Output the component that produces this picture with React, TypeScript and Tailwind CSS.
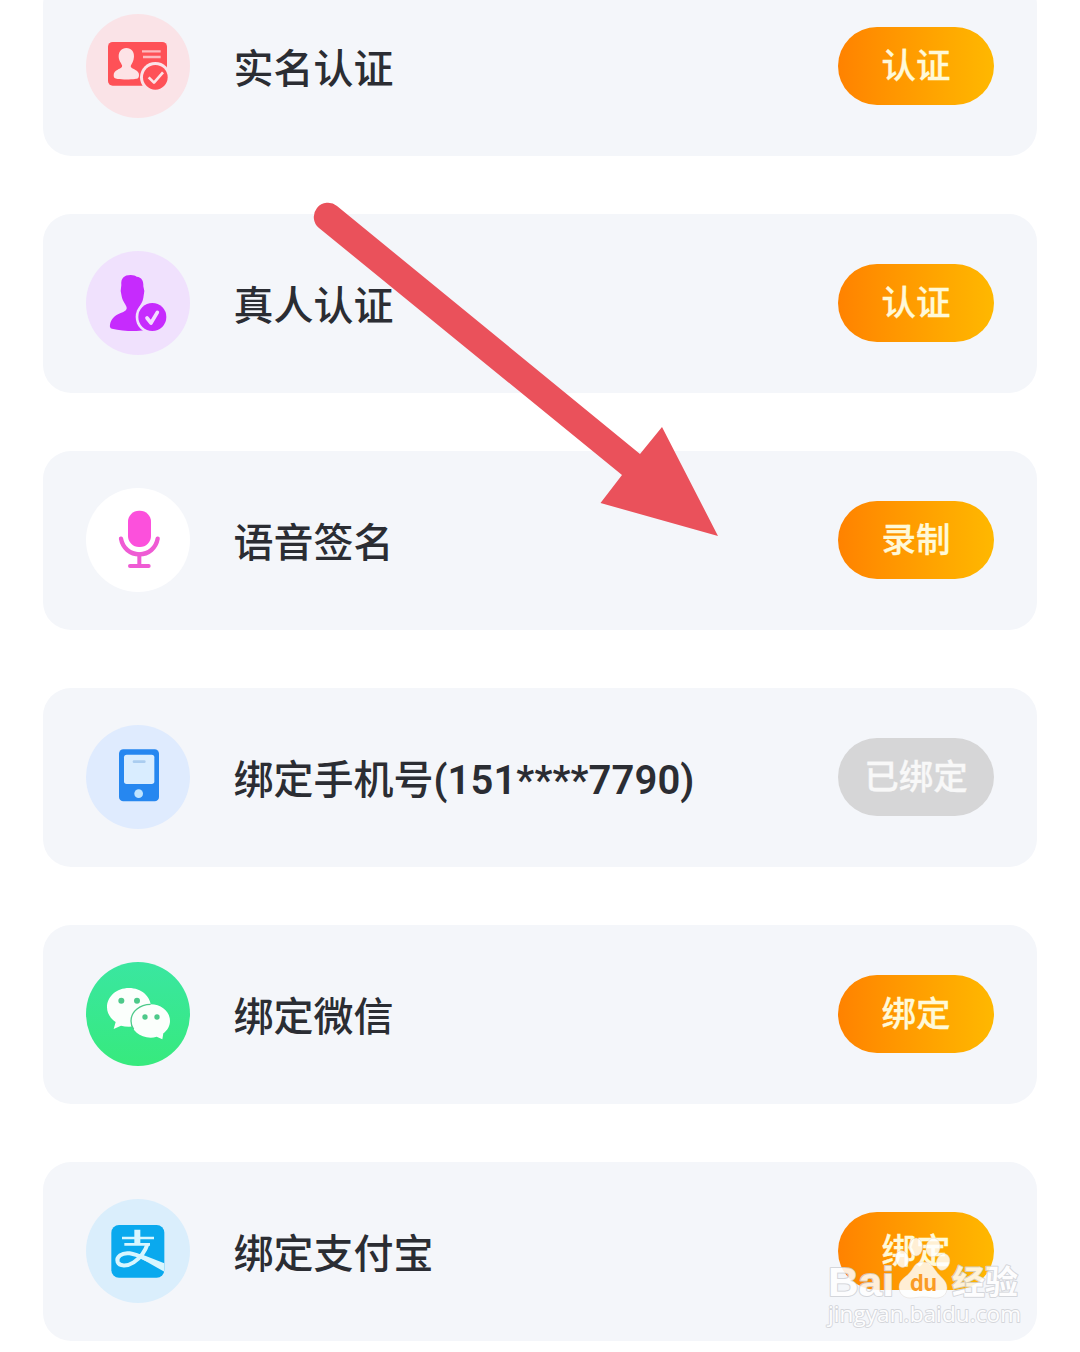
import React from 'react';

const IdCardIcon = () => (
  <svg viewBox="24 18 312 312" className="w-full h-full">
    <rect x="90" y="102" width="177" height="131" rx="14" fill="#fe5157" />
    <path
      d="M145 120c15 0 24 11 23 26-1 13-6 20-9 26-3 7 4 9 12 13 8 4 12 8 12 16 0 9-3 11-12 12-14 2-37 2-52 0-9-1-12-3-12-11 0-9 4-13 12-17 8-4 15-6 13-13-2-7-10-13-10-27 0-14 8-25 23-25z"
      fill="#fde3e6"
    />
    <path d="M192 130h56M195 147h53" stroke="#fdb9bf" strokeWidth="7" />
    <circle cx="232" cy="208" r="46" fill="#fbe3e8" />
    <circle cx="232" cy="208" r="37" fill="#fe5157" />
    <path d="M212 208l16 16 27-31" fill="none" stroke="#fde3e6" strokeWidth="8" strokeLinejoin="round" />
  </svg>
);

const PersonIcon = () => (
  <svg viewBox="24 18 312 312" className="w-full h-full">
    <path
      d="M158 90c9 0 14 3 18 5 15 1 21 13 20 29l3 14-3 20c-2 13-8 20-12 28-4 8-2 12 6 18l10 8v44c-26 4-66 3-98-5-6-2-7-6-6-12 2-16 14-28 32-35 12-5 19-9 18-16-1-8-12-18-15-34l-3-16 2-18c-2-20 8-30 28-30z"
      fill="#c62bfd"
    />
    <circle cx="223" cy="216" r="50" fill="#f0e1fd" />
    <circle cx="223" cy="216" r="42" fill="#c62bfd" />
    <path d="M207 219l12 15 19-32" fill="none" stroke="#f3dcff" strokeWidth="11" strokeLinecap="round" strokeLinejoin="round" />
  </svg>
);

const MicIcon = () => (
  <svg viewBox="24 18 312 312" className="w-full h-full">
    <rect x="150" y="86" width="69" height="109" rx="33" fill="#fc50dc" />
    <path d="M129 170c5 28 27 47 55 47s50-19 55-47" fill="none" stroke="#ef5bd4" strokeWidth="13" strokeLinecap="round" />
    <path d="M184 217v33M156 252h56" fill="none" stroke="#ef5bd4" strokeWidth="12" strokeLinecap="round" />
  </svg>
);

const PhoneIcon = () => (
  <svg viewBox="24 18 312 312" className="w-full h-full">
    <rect x="123" y="91" width="120" height="156" rx="13" fill="#2687f0" />
    <rect x="138" y="107" width="91" height="88" rx="8" fill="#d9edff" />
    <path d="M168 128h31" stroke="#aacdf0" strokeWidth="8" strokeLinecap="round" />
    <circle cx="182" cy="224" r="13" fill="#bfe4ff" />
  </svg>
);

const WechatIcon = () => (
  <svg viewBox="24 18 312 312" className="w-full h-full">
    <path
      d="M153 96c37 0 66 25 66 58s-29 58-66 58c-9 0-17-1-24-3l-22 10 6-21c-16-11-26-26-26-44 0-33 29-58 66-58z"
      fill="#fbfffc"
    />
    <path
      d="M218 145c33 0 58 22 58 50 0 15-8 28-20 37l-3 18-17-8c-6 2-12 3-18 3-33 0-59-22-59-50s26-50 59-50z"
      fill="#fbfffc"
    />
    <path d="M218 145c-33 0-59 22-59 50 0 10 3 18 8 25" fill="none" stroke="#4dc98a" strokeWidth="4" />
    <g fill="#4dc98a">
      <circle cx="130" cy="134" r="9" />
      <circle cx="177" cy="134" r="9" />
      <circle cx="201" cy="183" r="8" />
      <circle cx="237" cy="183" r="8" />
    </g>
  </svg>
);

const AlipayIcon = () => (
  <svg viewBox="24 18 312 312" className="w-full h-full">
    <rect x="100" y="96" width="159" height="158" rx="23" fill="#0aa9ee" />
    <g fill="none" stroke="#d8f6ff">
      <path d="M178 110v45" strokeWidth="18" />
      <path d="M132 135h96" strokeWidth="8" />
      <path d="M139 154h77" strokeWidth="8" />
      <path d="M209 152c-8 25-22 43-42 56-20 13-43 12-48-1-5-15 12-29 36-26 16 2 34 10 54 19" strokeWidth="12" />
      <path d="M190 184l69 27v25l-74-42z" fill="#d8f6ff" stroke="none" />
    </g>
  </svg>
);

const items = [
  { title: '实名认证', action: '认证', Icon: IdCardIcon, bg: 'bg-[#fae3e7]' },
  { title: '真人认证', action: '认证', Icon: PersonIcon, bg: 'bg-[#f0e1fd]' },
  { title: '语音签名', action: '录制', Icon: MicIcon, bg: 'bg-white' },
  { title: '绑定手机号', phone: '(151****7790)', action: '已绑定', done: true, Icon: PhoneIcon, bg: 'bg-[#dfebfe]' },
  { title: '绑定微信', action: '绑定', Icon: WechatIcon, bg: 'bg-linear-to-b from-[#3ae6a0] to-[#37ea7d]' },
  { title: '绑定支付宝', action: '绑定', Icon: AlipayIcon, bg: 'bg-[#daeefc]' },
];

function Watermark() {
  return (
    <svg viewBox="0 0 240 152" className="absolute left-[810px] top-[1200px] w-[240px] h-[152px] pointer-events-none">
      <g fill="#fff" stroke="#cfd1d6" strokeWidth="2" strokeLinejoin="round" paintOrder="stroke" opacity="0.85">
        <text x="18" y="96" fontSize="41" fontWeight="700" textLength="66" lengthAdjust="spacingAndGlyphs" fontFamily="Liberation Sans, sans-serif">
          Bai
        </text>
        <text x="142" y="93.5" fontSize="33" fontWeight="700" textLength="66" fontFamily="Noto Sans CJK SC, sans-serif">
          经验
        </text>
        <text x="18" y="122" fontSize="22.5" fontWeight="500" textLength="193" strokeWidth="1.8" fontFamily="Open Sans, sans-serif">
          jingyan.baidu.com
        </text>
      </g>
      {/* paw */}
      <g fill="#fff" fillOpacity="0.83" stroke="#d9cfc8" strokeOpacity="0.5" strokeWidth="0.8">
        <ellipse cx="92" cy="59" rx="6.5" ry="8.5" transform="rotate(-12 92 59)" />
        <ellipse cx="106" cy="47" rx="6.5" ry="9" />
        <ellipse cx="123" cy="47.5" rx="7" ry="9.5" transform="rotate(10 123 47.5)" />
        <ellipse cx="133" cy="62" rx="6.5" ry="8.5" transform="rotate(20 133 62)" />
        <path d="M113 62c8 0 10 5 13 9 4 6 11 9 11 17 0 7-5 10-11 10-5 0-8-1-13-1s-8 1-13 1c-6 0-11-4-11-11 0-8 8-10 12-16 3-4 4-9 12-9z" />
      </g>
      <text x="100" y="91" fontSize="23" fontWeight="700" textLength="27" lengthAdjust="spacingAndGlyphs" fill="#fa9b24" fontFamily="Inter, sans-serif">
        du
      </text>
    </svg>
  );
}

export default function App() {
  return (
    <div className="relative w-[1080px] h-[1352px] overflow-hidden bg-white font-['Roboto','Noto_Sans_CJK_SC',sans-serif]">
      <div className="flex flex-col gap-[58px] px-[43px] -mt-[23px]">
        {items.map(({ title, phone, action, done, Icon, bg }) => (
          <div key={title} className="flex items-start h-[179px] pt-[37px] shrink-0 px-[43px] rounded-[28px] bg-[#f4f6fa]">
            <div className={`w-[104px] h-[104px] rounded-full overflow-hidden ${bg}`}>
              <Icon />
            </div>
            <div className="ml-[43.5px] mt-[26px] flex-1 text-[40px] leading-[60px] font-medium text-[#2b2d33] whitespace-nowrap">
              {title}
              {phone && <span className="font-semibold tracking-[0.1px]">{phone}</span>}
            </div>
            <button
              className={`w-[156px] h-[78px] mt-[13px] pt-[1px] rounded-full text-[34.5px] leading-none font-medium [-webkit-text-stroke:0.3px] ${
                done ? 'bg-[#d6d6d7] text-[#f8f8f8]' : 'bg-linear-to-r from-[#ff8200] to-[#ffb800] text-[#fff9d8]'
              }`}
            >
              {action}
            </button>
          </div>
        ))}
      </div>

      <svg viewBox="0 0 430 360" className="absolute left-[300px] top-[190px] w-[430px] h-[360px] pointer-events-none">
        <path d="M37 16L340 264L362 237L418 346L300.5 313L322 285L19 38A14 14 0 0 1 37 16Z" fill="#ea515b" />
      </svg>
      <Watermark />
    </div>
  );
}
